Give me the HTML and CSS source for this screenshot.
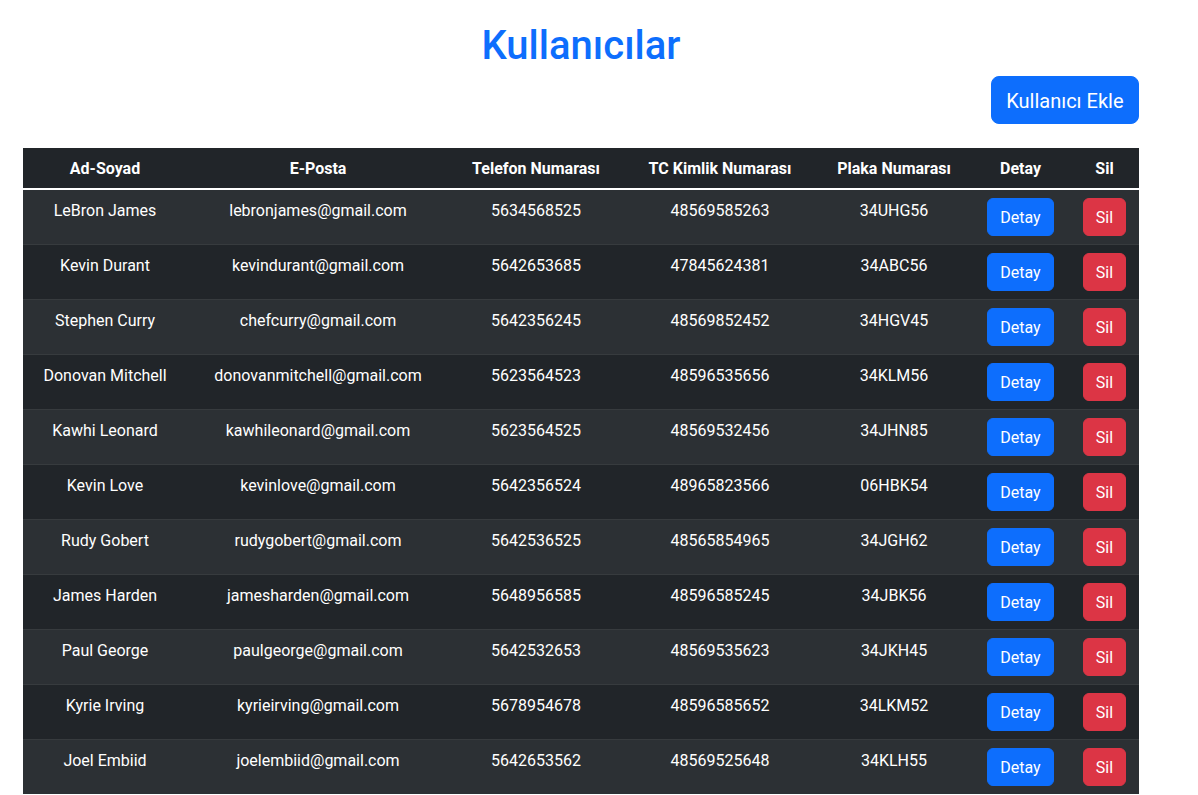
FILE: index.html
```html
<!DOCTYPE html>
<html lang="tr">
<head>
<meta charset="utf-8">
<title>Kullanıcılar</title>
<link rel="stylesheet" href="styles.css">
</head>
<body>
<div class="page">
  <h1 class="title">Kullanıcılar</h1>
  <div class="toolbar">
    <button class="btn btn-primary btn-lg">Kullanıcı Ekle</button>
  </div>
  <table class="users">
    <colgroup>
      <col class="c-name"><col class="c-mail"><col class="c-tel"><col class="c-tc"><col class="c-plate"><col class="c-detail"><col class="c-del">
    </colgroup>
    <thead>
      <tr><th>Ad-Soyad</th><th>E-Posta</th><th>Telefon Numarası</th><th>TC Kimlik Numarası</th><th>Plaka Numarası</th><th>Detay</th><th>Sil</th></tr>
    </thead>
    <tbody>
      <tr><td>LeBron James</td><td>lebronjames@gmail.com</td><td>5634568525</td><td>48569585263</td><td>34UHG56</td><td><button class="btn btn-primary">Detay</button></td><td><button class="btn btn-danger">Sil</button></td></tr>
      <tr><td>Kevin Durant</td><td>kevindurant@gmail.com</td><td>5642653685</td><td>47845624381</td><td>34ABC56</td><td><button class="btn btn-primary">Detay</button></td><td><button class="btn btn-danger">Sil</button></td></tr>
      <tr><td>Stephen Curry</td><td>chefcurry@gmail.com</td><td>5642356245</td><td>48569852452</td><td>34HGV45</td><td><button class="btn btn-primary">Detay</button></td><td><button class="btn btn-danger">Sil</button></td></tr>
      <tr><td>Donovan Mitchell</td><td>donovanmitchell@gmail.com</td><td>5623564523</td><td>48596535656</td><td>34KLM56</td><td><button class="btn btn-primary">Detay</button></td><td><button class="btn btn-danger">Sil</button></td></tr>
      <tr><td>Kawhi Leonard</td><td>kawhileonard@gmail.com</td><td>5623564525</td><td>48569532456</td><td>34JHN85</td><td><button class="btn btn-primary">Detay</button></td><td><button class="btn btn-danger">Sil</button></td></tr>
      <tr><td>Kevin Love</td><td>kevinlove@gmail.com</td><td>5642356524</td><td>48965823566</td><td>06HBK54</td><td><button class="btn btn-primary">Detay</button></td><td><button class="btn btn-danger">Sil</button></td></tr>
      <tr><td>Rudy Gobert</td><td>rudygobert@gmail.com</td><td>5642536525</td><td>48565854965</td><td>34JGH62</td><td><button class="btn btn-primary">Detay</button></td><td><button class="btn btn-danger">Sil</button></td></tr>
      <tr><td>James Harden</td><td>jamesharden@gmail.com</td><td>5648956585</td><td>48596585245</td><td>34JBK56</td><td><button class="btn btn-primary">Detay</button></td><td><button class="btn btn-danger">Sil</button></td></tr>
      <tr><td>Paul George</td><td>paulgeorge@gmail.com</td><td>5642532653</td><td>48569535623</td><td>34JKH45</td><td><button class="btn btn-primary">Detay</button></td><td><button class="btn btn-danger">Sil</button></td></tr>
      <tr><td>Kyrie Irving</td><td>kyrieirving@gmail.com</td><td>5678954678</td><td>48596585652</td><td>34LKM52</td><td><button class="btn btn-primary">Detay</button></td><td><button class="btn btn-danger">Sil</button></td></tr>
      <tr><td>Joel Embiid</td><td>joelembiid@gmail.com</td><td>5642653562</td><td>48569525648</td><td>34KLH55</td><td><button class="btn btn-primary">Detay</button></td><td><button class="btn btn-danger">Sil</button></td></tr>
    </tbody>
  </table>
</div>
</body>
</html>
```
FILE: styles.css
```css
* { box-sizing: border-box; }
html, body { margin: 0; padding: 0; background: #fff; }
body {
  font-family: Roboto, "Noto Sans", "Liberation Sans", Arial, sans-serif;
  font-size: 16px;
  line-height: 1.5;
  color: #212529;
}
.page {
  width: 1116px;
  margin-left: 23px;
}
.title {
  margin: 22px 0 0;
  font-size: 40px;
  font-weight: 500;
  line-height: 1.2;
  text-align: center;
  color: #0d6efd;
}
.toolbar {
  display: flex;
  justify-content: flex-end;
  margin-top: 6px;
  margin-bottom: 24px;
}
.btn {
  display: inline-block;
  font-family: inherit;
  font-size: 16px;
  line-height: 24px;
  padding: 7px 12px 5px;
  border: 1px solid transparent;
  border-radius: 6px;
  color: #fff;
  cursor: pointer;
}
.btn-lg {
  font-size: 20px;
  line-height: 30px;
  padding: 9px 14.5px 7px;
  border-radius: 8px;
}
.btn-primary { background: #0d6efd; border-color: #0d6efd; }
.btn-danger { background: #dc3545; border-color: #dc3545; }
.users {
  width: 1116px;
  table-layout: fixed;
  border-collapse: collapse;
  color: #fff;
  background: #212529;
}
.c-name { width: 164px; }
.c-mail { width: 262px; }
.c-tel { width: 174px; }
.c-tc { width: 194px; }
.c-plate { width: 154px; }
.c-detail { width: 99px; }
.c-del { width: 69px; }
.users th, .users td {
  padding: 9px 8px 7px;
  text-align: center;
  vertical-align: top;
  white-space: nowrap;
}
.users th {
  height: 40px;
  font-weight: 700;
}
.users thead tr { border-bottom: 2px solid #fff; }
.users tbody tr { height: 55px; border-bottom: 1px solid #373b3e; }
.users tbody tr:last-child { border-bottom: 0; }
.users tbody tr:nth-child(odd) { background: #2c3034; }
.users td .btn { vertical-align: top; margin-top: -1px; }
```
